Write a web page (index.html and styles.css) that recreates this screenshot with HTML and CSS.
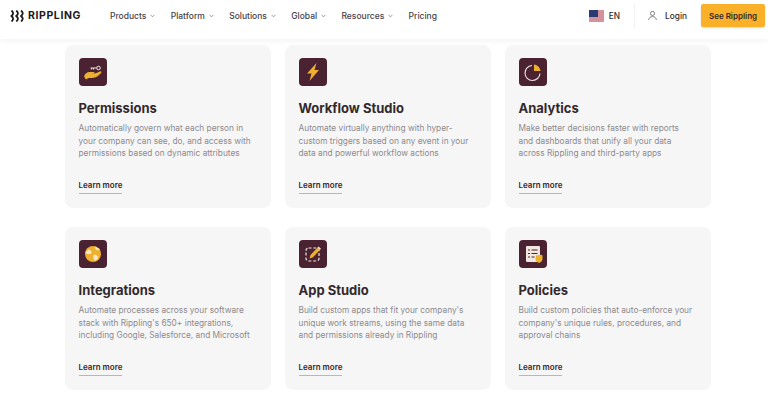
FILE: index.html
```html
<!DOCTYPE html>
<html lang="en">
<head>
    <meta charset="UTF-8">
    <title>Rippling - Platform</title>
    <link rel="stylesheet" href="styles.css">
</head>
<body>
    <header class="page-header">
        <a class="logo" href="#">
            <svg width="14" height="12" viewBox="0 0 14 12" fill="none" stroke="#1d1a1c" stroke-width="1.800">
                <path d="M1.500 .5c2.200 2 2.200 3.600 0 5.500 2.200 2 2.200 3.500 0 5.500"/>
                <path d="M6.300 .5c2.200 2 2.200 3.600 0 5.500 2.200 2 2.200 3.500 0 5.500"/>
                <path d="M11.100 .5c2.200 2 2.200 3.600 0 5.500 2.200 2 2.200 3.500 0 5.500"/>
            </svg>
            <span class="logo-text">RIPPLING</span>
        </a>
        <nav class="main-nav">
            <a href="#">Products <svg class="chev" viewBox="0 0 6 4"><path d="M.7.7 3 3l2.300-2.300"/></svg></a>
            <a href="#">Platform <svg class="chev" viewBox="0 0 6 4"><path d="M.7.7 3 3l2.300-2.300"/></svg></a>
            <a href="#">Solutions <svg class="chev" viewBox="0 0 6 4"><path d="M.7.7 3 3l2.300-2.300"/></svg></a>
            <a href="#">Global <svg class="chev" viewBox="0 0 6 4"><path d="M.7.7 3 3l2.300-2.300"/></svg></a>
            <a href="#">Resources <svg class="chev" viewBox="0 0 6 4"><path d="M.7.7 3 3l2.300-2.300"/></svg></a>
            <a href="#">Pricing</a>
        </nav>
        <div class="header-actions">
            <a class="lang" href="#">
                <svg width="15" height="12" viewBox="0 0 15 12">
                    <rect width="15" height="12" fill="#f3eef0"/>
                    <path d="M0 1h15M0 3h15M0 5h15M0 7h15M0 9h15M0 11h15" stroke="#b5364a" stroke-width="1"/>
                    <rect width="9" height="7" fill="#2c3a73"/>
                </svg>
                EN
            </a>
            <a class="login" href="#">
                <svg width="9" height="11" viewBox="0 0 10 11" fill="none" stroke="#55525a" stroke-width=".8">
                    <circle cx="5" cy="3.200" r="2.300"/>
                    <path d="M.7 10.500c.4-2.600 2-3.800 4.300-3.800s3.900 1.200 4.300 3.800"/>
                </svg>
                Login
            </a>
            <a class="cta" href="#">See Rippling</a>
        </div>
    </header>

    <main class="card-grid">
        <section class="card">
            <div class="icon-box">
                <svg viewBox="0 0 28 28">
                    <circle cx="19.500" cy="10" r="1.800" fill="none" stroke="#f2e6e0" stroke-width="1"/>
                    <path d="M17.500 10H11.500M12.500 10v1.500M14.500 10v1.500" stroke="#f2e6e0" stroke-width="1" fill="none"/>
                    <path d="M5 18.500c1-3 3-4.500 5.500-4.500h4c1 0 1.500 1 .5 1.500h-3c3 .5 6-.5 9-2 1.200-.5 2 .5 1 1.500-2 2.500-5 5-9 5H9.500L7 21.500z" fill="#eeb02f"/>
                </svg>
            </div>
            <h2>Permissions</h2>
            <p>Automatically govern what each person in your company can see, do, and access with permissions based on dynamic attributes</p>
            <a class="learn-more" href="#">Learn more</a>
        </section>
        <section class="card">
            <div class="icon-box">
                <svg viewBox="0 0 28 28">
                    <path d="M17.500 5 8 15.500h4.500L10.500 23 20 12h-4.500z" fill="#eeb02f"/>
                </svg>
            </div>
            <h2>Workflow Studio</h2>
            <p>Automate virtually anything with hyper-custom triggers based on any event in your data and powerful workflow actions</p>
            <a class="learn-more" href="#">Learn more</a>
        </section>
        <section class="card">
            <div class="icon-box">
                <svg viewBox="0 0 28 28">
                    <path d="M13 7.500a7.500 7.500 0 1 0 8 8" fill="none" stroke="#f2e6e0" stroke-width="1.100"/>
                    <path d="M15 6.500c3.500.3 6 3 6.500 6.500H15z" fill="#eeb02f"/>
                </svg>
            </div>
            <h2>Analytics</h2>
            <p>Make better decisions faster with reports and dashboards that unify all your data across Rippling and third-party apps</p>
            <a class="learn-more" href="#">Learn more</a>
        </section>
        <section class="card">
            <div class="icon-box">
                <svg viewBox="0 0 28 28">
                    <circle cx="14" cy="14" r="8" fill="#eeb02f"/>
                    <path d="M9 9.500c2 0 3 1 3.500 2.500s-1 2-2.500 2-3-.5-3.500-1.500M16 6.500c-.5 2 .5 3 2 3.500s2.500 0 3-.8M15 15c1.500-.5 3.500.5 4 2s-1 3-2.500 3.500-2-1-2-2.500-.5-2.500.5-3z" fill="#f6e7c4"/>
                </svg>
            </div>
            <h2>Integrations</h2>
            <p>Automate processes across your software stack with Rippling's 650+ integrations, including Google, Salesforce, and Microsoft</p>
            <a class="learn-more" href="#">Learn more</a>
        </section>
        <section class="card">
            <div class="icon-box">
                <svg viewBox="0 0 28 28">
                    <rect x="7" y="8" width="13" height="13" rx="2.500" fill="none" stroke="#f2e6e0" stroke-width="1.200" stroke-dasharray="3 1.800"/>
                    <path d="M10.500 18.500l1-3.500 7-7.500 2.500 2.300-7 7.500z" fill="#eeb02f"/>
                    <path d="M18.500 7.500l1-1 2.500 2.300-1 1z" fill="#f2e6e0"/>
                </svg>
            </div>
            <h2>App Studio</h2>
            <p>Build custom apps that fit your company's unique work streams, using the same data and permissions already in Rippling</p>
            <a class="learn-more" href="#">Learn more</a>
        </section>
        <section class="card">
            <div class="icon-box">
                <svg viewBox="0 0 28 28">
                    <rect x="7" y="6" width="14" height="16" rx="1" fill="#f2e6e0"/>
                    <path d="M9 10h2M12.500 10h6M9 13.500h2M12.500 13.500h6M9 17h2M12.500 17h3" stroke="#4a2231" stroke-width="1.100"/>
                    <path d="M17 15.500l5.500-.8 1 .8v3.500c0 2-1.500 3.300-3.500 4-2-.7-3.500-2-3.500-4z" fill="#eeb02f"/>
                </svg>
            </div>
            <h2>Policies</h2>
            <p>Build custom policies that auto-enforce your company's unique rules, procedures, and approval chains</p>
            <a class="learn-more" href="#">Learn more</a>
        </section>
    </main>
</body>
</html>
```

FILE: styles.css
```css
:root {
    --font-body: "Inter", "Liberation Sans", sans-serif;
    --color-text: #33292d;
    --color-muted: #8d8a8d;
    --color-card: #f6f6f7;
    --color-icon: #4a2231;
    --color-yellow: #fbb02a;
}
body {
    font-family: var(--font-body);
    background-color: #ffffff;
    color: var(--color-text);
    margin: 0;
    height: 402px;
    overflow: hidden;
}
a {
    text-decoration: none;
    color: inherit;
}

/* header */
.page-header {
    display: flex;
    align-items: center;
    height: 39px;
    padding: 0 3px 8px 10px;
    box-sizing: border-box;
    box-shadow: 0 3px 5px rgba(0, 0, 0, 0.04);
}
.logo {
    display: flex;
    align-items: center;
    gap: 4px;
    width: 100px;
}
.logo-text {
    font-size: 10.500px;
    font-weight: 700;
    letter-spacing: 0.6px;
    color: #1d1a1c;
}
.main-nav {
    display: flex;
    gap: 15.300px;
    font-size: 8.500px;
    font-weight: 500;
    color: #46424a;
}
.main-nav a {
    display: flex;
    align-items: center;
    gap: 4px;
}
.chev {
    width: 5px;
    height: 4px;
    fill: none;
    stroke: #6a676c;
    stroke-width: 0.8;
}
.header-actions {
    display: flex;
    align-items: center;
    margin-left: auto;
    font-size: 8.300px;
    font-weight: 500;
}
.lang {
    display: flex;
    align-items: center;
    gap: 5px;
    padding-right: 14px;
    margin-right: 13px;
    border-right: 1px solid #f4f4f4;
    height: 26px;
}
.login {
    display: flex;
    align-items: center;
    gap: 8px;
    margin-right: 14px;
}
.cta {
    display: flex;
    align-items: center;
    justify-content: center;
    width: 64px;
    height: 23px;
    background-color: var(--color-yellow);
    border-radius: 2px;
    font-size: 8px;
    font-weight: 600;
    box-shadow: 0 1px 2px rgba(0, 0, 0, 0.15);
}

/* cards */
.card-grid {
    display: grid;
    grid-template-columns: repeat(3, 206px);
    grid-auto-rows: 163px;
    gap: 19px 14px;
    padding: 6px 0 0 65px;
}
.card {
    display: flex;
    flex-direction: column;
    align-items: flex-start;
    padding: 13px 13.500px 14px;
    background-color: var(--color-card);
    border-radius: 8px;
    box-sizing: border-box;
}
.icon-box {
    width: 28px;
    height: 28px;
    background-color: var(--color-icon);
    border-radius: 4px;
}
.icon-box svg {
    display: block;
    width: 28px;
    height: 28px;
}
.card h2 {
    margin: 14px 0 5px;
    font-size: 13px;
    line-height: 17px;
    font-weight: 700;
}
.card p {
    margin: 0;
    max-width: 177px;
    font-size: 8.300px;
    line-height: 12.500px;
    color: var(--color-muted);
}
.learn-more {
    margin-top: auto;
    padding-bottom: 3px;
    font-size: 8px;
    font-weight: 600;
    border-bottom: 1px solid var(--color-yellow);
}
```
